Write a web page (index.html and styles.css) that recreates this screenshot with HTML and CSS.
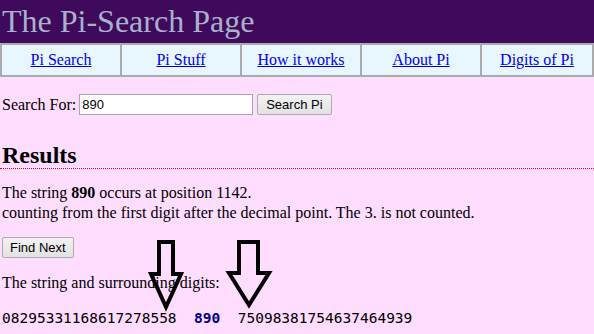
FILE: index.html
```html
<!DOCTYPE html>
<html lang="en">
  <head>
    <meta charset="UTF-8" />
    <title>The Pi-Search Page</title>
    <link rel="stylesheet" href="styles.css">
  </head>
  <body>
    <div class="header">
      <h1>The Pi-Search Page</h1>
    </div>
    <div class="nav">
      <div class="cell"><a href="#">Pi Search</a></div>
      <div class="cell"><a href="#">Pi Stuff</a></div>
      <div class="cell"><a href="#">How it works</a></div>
      <div class="cell"><a href="#">About Pi</a></div>
      <div class="cell"><a href="#">Digits of Pi</a></div>
    </div>

    <div class="content">
      <!-- search form -->
      <form class="search">
        <label for="q">Search For:</label>
        <input type="text" id="q" value="890" />
        <input type="button" class="btn" value="Search Pi" />
      </form>

      <h2>Results</h2>
      <p class="result">
        The string <b>890</b> occurs at position 1142.<br />
        counting from the first digit after the decimal point. The 3. is not counted.
      </p>
      <input type="button" class="btn next" value="Find Next" />
      <p class="surround">The string and surrounding digits:</p>
      <div class="digits">08295331168617278558  <b>890</b>  75098381754637464939</div>
    </div>

    <!-- arrows drawn on top of the screenshot -->
    <svg class="arrows" width="594" height="334" viewBox="0 0 594 334">
      <path d="M159 242 H173 V274 H181 L166 307 L151 274 H159 Z" fill="none" stroke="#000" stroke-width="4" stroke-linejoin="miter" />
      <path d="M239 242 H258 V273 H269 L249 305 L229 273 H239 Z" fill="none" stroke="#000" stroke-width="4" stroke-linejoin="miter" />
    </svg>
  </body>
</html>
```

FILE: styles.css
```css
body {
  margin: 0;
  padding: 0;
  background-color: #ffddff;
  font-family: "Liberation Serif", "Times New Roman", serif;
  font-size: 16px;
  color: #000;
  position: relative;
}

.header {
  height: 43px;
  background-color: #400a5c;
}

.header h1 {
  margin: 0;
  padding: 0 0 0 2px;
  font-size: 32px;
  font-weight: normal;
  line-height: 43px;
  color: #a9b1cc;
}

.nav {
  display: grid;
  grid-template-columns: 118px 118px 118px 118px 1fr;
  gap: 2px;
  padding: 2px;
  background-color: #aaaaaa;
}

.nav .cell {
  height: 30px;
  background-color: #e8f6ff;
  text-align: center;
  line-height: 30px;
}

.nav a {
  color: #0000ee;
}

.content {
  padding: 0 2px;
}

.search {
  margin: 17px 0 0;
  display: flex;
  align-items: center;
  height: 21px;
}

.search label {
  margin-right: 3px;
}

.search input[type="text"] {
  width: 174px;
  height: 21px;
  box-sizing: border-box;
  border: 1px solid #a9a9a9;
  padding: 1px 2px;
  font-family: "Liberation Sans", Arial, sans-serif;
  font-size: 13px;
  margin: 0 4px 0 0;
}

.btn {
  height: 21px;
  padding: 0 8px;
  border: 1px solid #acacac;
  border-radius: 2px;
  background: linear-gradient(#f2f2f2, #e2e2e2);
  font-family: "Liberation Sans", Arial, sans-serif;
  font-size: 13px;
  color: #000;
  margin: 0;
}

h2 {
  margin: 28px -2px 0;
  padding: 0 2px 1px;
  font-size: 24px;
  line-height: 24px;
  border-bottom: 1px dotted #ff0000;
}

.result {
  margin: 14px 0 14px;
  line-height: 20px;
}

.next {
  display: block;
  padding: 0 7px;
}

.surround {
  margin: 15px 0 16px;
  line-height: 20px;
}

.digits {
  white-space: pre;
  font-family: "DejaVu Sans Mono", monospace;
  font-size: 14.5px;
  line-height: 18px;
}

.digits b {
  color: #000088;
}

.arrows {
  position: absolute;
  left: 0;
  top: 0;
  pointer-events: none;
}
```
